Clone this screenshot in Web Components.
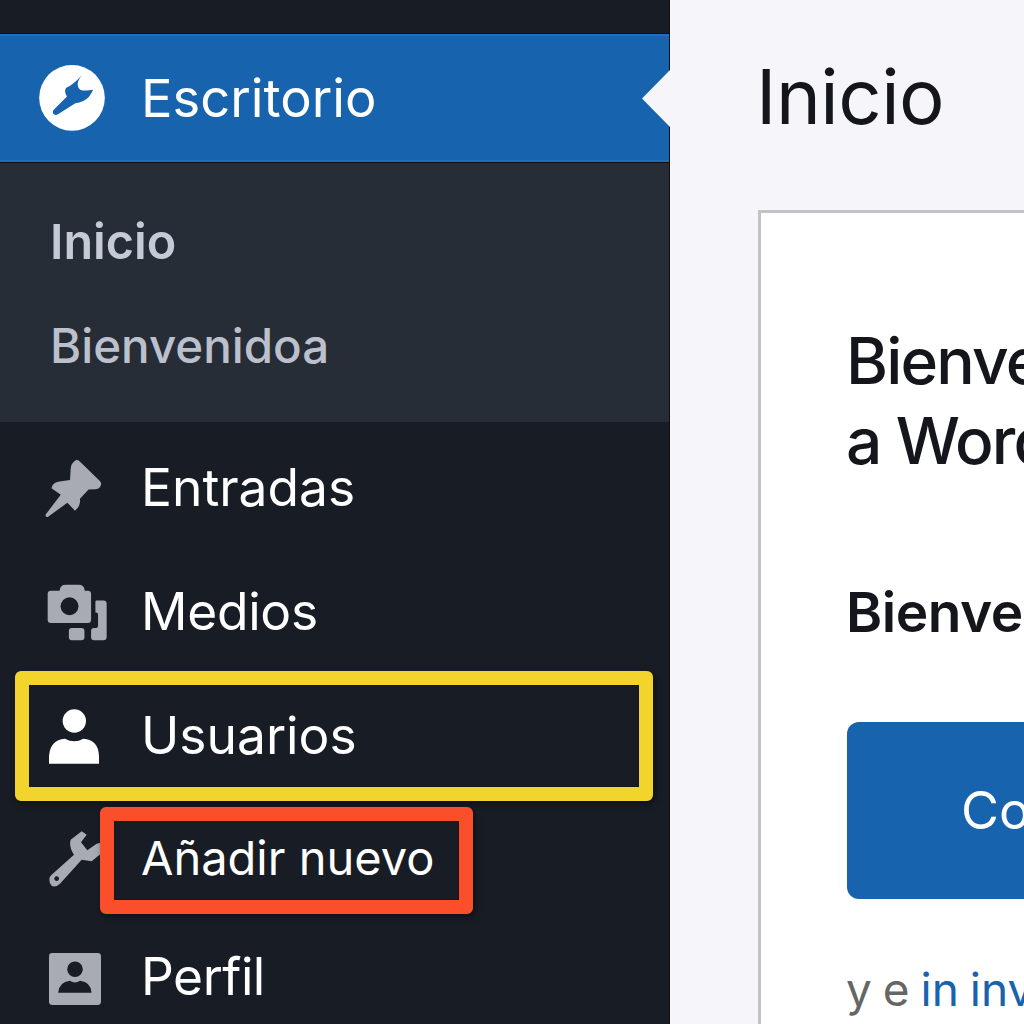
<!DOCTYPE html>
<html lang="es">
<head>
  <meta charset="UTF-8">
  <title>Escritorio</title>
  <style>
    html,
    body {
      margin: 0;
      height: 100%;
      overflow: hidden;
      background-color: #f6f5f9;
    }
    body {
      display: flex;
      height: 1024px;
      font-family: Inter, "Liberation Sans", sans-serif;
    }
  </style>
</head>
<body>
<wp-sidebar>
  <wp-current-item label="Escritorio"></wp-current-item>
  <wp-submenu>
    <wp-subitem strong>Inicio</wp-subitem>
    <wp-subitem>Bienvenidoa</wp-subitem>
  </wp-submenu>
  <wp-item icon="pin" height="124" style="margin-top:4px">Entradas</wp-item>
  <wp-item icon="camera" height="124" style="letter-spacing:-.3px">Medios</wp-item>
  <wp-item icon="person" height="124" active>Usuarios<wp-callout slot="over" style="--c:#f2d42c;top:-3px;bottom:-3px;left:15px;width:638px"></wp-callout></wp-item>
  <wp-item icon="wrench" height="120" small>Añadir nuevo<wp-callout slot="over" style="--c:#fb4f2b;top:9px;bottom:4px;left:100px;width:373px"></wp-callout></wp-item>
  <wp-item icon="profile" height="118" style="letter-spacing:-.5px">Perfil</wp-item>
</wp-sidebar>
<wp-main>
  <wp-welcome></wp-welcome>
</wp-main>

<script>
  // box = left, width, height, and how far the icon sits below the row's middle
  const ICONS = {
    pin: {
      box: [45, 57, 59, 0],
      view: '75 50 171 178',
      body: '<path fill="#a8abb3" d="M170 52Q176 52 182 60L240 116Q248 125 240 135Q236 141 226 141L206 142L180 170Q183 190 165 206L142 182L84 224Q76 228 76 218L122 158L94 138Q98 120 118 118L150 113L152 80Q152 62 170 52Z"/>'
    },
    camera: {
      box: [47, 60, 57, 0],
      view: '80 430 181 172',
      body: '<g fill="#a8abb3"><path d="M92 450H118Q120 432 136 432H176Q192 432 194 450H203Q213 450 213 460V538Q213 548 203 548H92Q82 548 82 538V460Q82 450 92 450Z"/><rect x="146" y="563" width="47" height="37" rx="9"/><path d="M228 480H250Q260 480 260 490V590Q260 600 250 600H222Q213 600 213 590V572Q213 563 222 563H228Q234 563 234 556V522Q234 516 228 516H226V486Q226 480 228 480Z"/></g><circle cx="148" cy="497" r="27" fill="#181c25"/>'
    },
    person: {
      box: [49, 50, 55, 0],
      view: '147 148 150 165',
      body: '<g fill="#fff"><circle cx="223" cy="184" r="35"/><path d="M147 312V290Q150 240 195 237Q223 252 250 237Q296 240 297 290V312Z"/></g>'
    },
    wrench: {
      box: [49, 54, 57, 1.5],
      view: '147 514 162 171',
      body: '<path fill="#a8abb3" fill-rule="evenodd" d="M148 660Q148 650 155 645L222 585Q206 562 212 540L245 515L260 525L243 548L262 572L290 552L308 548V578L275 605L245 600L180 672Q165 685 155 678Q148 672 148 660ZM170 650a7 7 0 1 0 .01 0Z"/>'
    },
    profile: {
      box: [49, 52, 52, 2],
      view: '148 880 154 154',
      body: '<rect x="148" y="880" width="154" height="154" rx="10" fill="#a8abb3"/><g fill="#181c25"><circle cx="225" cy="928" r="23"/><path d="M175 998Q178 965 210 962Q225 972 240 962Q272 965 274 998Z"/></g>'
    }
  };

  class WpSidebar extends HTMLElement {
    constructor() {
      super();
      this.attachShadow({mode: 'open'}).innerHTML = `
        <style>
          :host {
            display: flex;
            flex-direction: column;
            flex: none;
            box-sizing: border-box;
            width: 670px;
            height: 1024px;
            padding-top: 34px;
            background: #181c25;
            border-right: 1px solid #0d0f14;
            color: #fff;
          }
        </style>
        <slot></slot>`;
    }
  }

  class WpCurrentItem extends HTMLElement {
    constructor() {
      super();
      const label = this.getAttribute('label');
      this.attachShadow({mode: 'open'}).innerHTML = `
        <style>
          :host {
            display: flex;
            align-items: center;
            position: relative;
            flex: none;
            box-sizing: border-box;
            height: 128px;
            padding-left: 39px;
            gap: 36px;
            background: #1763ad;
            border-top: 2px solid #1c70c0;
            border-bottom: 2px solid #1c70c0;
            box-shadow: 0 0 0 1px #0d0f14;
            font-size: 52.5px;
          }
          svg { flex: none; width: 66px; height: 66px; }
          .notch {
            position: absolute;
            right: -1px;
            top: 34px;
            width: 28px;
            height: 57px;
            background: #f6f5f9;
            clip-path: polygon(100% 0, 0 50%, 100% 100%);
          }
        </style>
        <svg viewBox="117 198 196 197">
          <circle cx="215" cy="296" r="98" fill="#fff"/>
          <path fill="#1763ad" d="M245 228Q228 248 233 262Q236 280 278 272Q268 296 250 305Q236 312 225 312L172 346Q164 350 158 342Q155 336 162 330L200 292Q190 276 198 266Q218 258 245 228Z"/>
        </svg>
        <span>${label}</span>
        <div class="notch"></div>`;
    }
  }

  class WpSubmenu extends HTMLElement {
    constructor() {
      super();
      this.attachShadow({mode: 'open'}).innerHTML = `
        <style>
          :host {
            display: flex;
            flex-direction: column;
            flex: none;
            box-sizing: border-box;
            height: 260px;
            padding: 27px 0 24px 50px;
            background: #272d37;
          }
        </style>
        <slot></slot>`;
    }
  }

  class WpSubitem extends HTMLElement {
    constructor() {
      super();
      this.attachShadow({mode: 'open'}).innerHTML = `
        <style>
          :host {
            display: flex;
            align-items: center;
            height: 104px;
            font-size: 47.5px;
            font-weight: 500;
            color: #bcc0cc;
          }
          :host([strong]) {
            font-size: 48.5px;
            font-weight: 600;
            color: #c6cad6;
          }
        </style>
        <slot></slot>`;
    }
  }

  class WpItem extends HTMLElement {
    constructor() {
      super();
      const icon = ICONS[this.getAttribute('icon')];
      const height = this.getAttribute('height');
      const [x, w, h, dy] = icon.box;
      this.attachShadow({mode: 'open'}).innerHTML = `
        <style>
          :host {
            display: flex;
            align-items: center;
            position: relative;
            flex: none;
            height: ${height}px;
            font-size: 51.5px;
          }
          :host([small]) { font-size: 47px; }
          .icon {
            flex: none;
            width: 141px;
          }
          .label { margin-top: -2px; }
          svg { display: block; width: ${w}px; height: ${h}px; margin: ${dy * 2}px 0 0 ${x}px; }
        </style>
        <div class="icon"><svg viewBox="${icon.view}">${icon.body}</svg></div>
        <span class="label"><slot></slot></span>
        <slot name="over"></slot>`;
    }
  }

  class WpCallout extends HTMLElement {
    constructor() {
      super();
      this.attachShadow({mode: 'open'}).innerHTML = `
        <style>
          :host {
            display: block;
            position: absolute;
            box-sizing: border-box;
            border: 14px solid var(--c);
            border-radius: 6px;
            box-shadow: 2px 3px 6px rgba(0, 0, 0, .45), inset 0 0 2px rgba(0, 0, 0, .6);
          }
        </style>`;
    }
  }

  class WpMain extends HTMLElement {
    constructor() {
      super();
      this.attachShadow({mode: 'open'}).innerHTML = `
        <style>
          :host {
            display: flex;
            flex-direction: column;
            flex: 1;
            min-width: 0;
            height: 1024px;
            padding-left: 88px;
            overflow: hidden;
            background: #f6f5f9;
            color: #14161c;
          }
          h1 {
            flex: none;
            margin: 0;
            height: 210px;
            padding-top: 51px;
            box-sizing: border-box;
            font-size: 76px;
            line-height: 90px;
            font-weight: 400;
            letter-spacing: -.5px;
            margin-left: -2px;
          }
        </style>
        <h1>Inicio</h1>
        <slot></slot>`;
    }
  }

  class WpWelcome extends HTMLElement {
    constructor() {
      super();
      this.attachShadow({mode: 'open'}).innerHTML = `
        <style>
          :host {
            display: block;
            flex: none;
            box-sizing: border-box;
            width: 700px;
            height: 900px;
            padding: 108px 0 0 85px;
            background: #fff;
            border: 3px solid #c2c2c7;
            white-space: nowrap;
          }
          h2 {
            margin: 0;
            font-size: 64px;
            line-height: 80px;
            font-weight: 500;
            letter-spacing: -1.8px;
          }
          h3 {
            margin: 96px 0 0;
            font-size: 55px;
            line-height: 70px;
            font-weight: 600;
            letter-spacing: -.5px;
          }
          .button {
            box-sizing: border-box;
            display: flex;
            align-items: center;
            width: 560px;
            height: 177px;
            margin: 75px 0 0 1px;
            padding-left: 114px;
            border-radius: 12px;
            background: #1763ad;
            color: #fff;
            font-size: 52px;
          }
          p {
            margin: 60px 0 0;
            font-size: 46px;
            line-height: 60px;
            word-spacing: -2px;
            color: #666;
          }
          a { color: #1763ad; text-decoration: none; }
        </style>
        <h2>Bienvenido<br>a WordPress</h2>
        <h3>Bienvenido</h3>
        <div class="button">Comenzar</div>
        <p>y e <a>in invitar</a></p>`;
    }
  }

  customElements.define('wp-sidebar', WpSidebar);
  customElements.define('wp-current-item', WpCurrentItem);
  customElements.define('wp-submenu', WpSubmenu);
  customElements.define('wp-subitem', WpSubitem);
  customElements.define('wp-item', WpItem);
  customElements.define('wp-callout', WpCallout);
  customElements.define('wp-main', WpMain);
  customElements.define('wp-welcome', WpWelcome);
</script>
</body>
</html>
